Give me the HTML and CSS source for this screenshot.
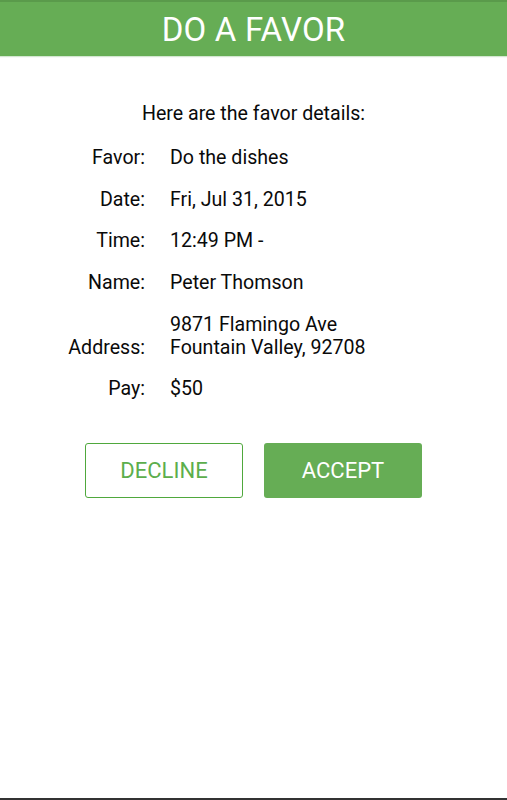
FILE: index.html
```html
<!DOCTYPE html>
<html lang="en">
<head>
    <meta charset="UTF-8">
    <meta name="viewport" content="width=device-width, initial-scale=1.0">
    <title>Do A Favor</title>
    <link rel="stylesheet" href="styles.css">
</head>
<body>

    <!-- Title Bar -->
    <header class="title-bar">
        <h1>DO A FAVOR</h1>
    </header>

    <main class="content">
        <p class="intro">Here are the favor details:</p>

        <!-- Favor Details -->
        <div class="details">
            <span class="label">Favor:</span>
            <span class="value">Do the dishes</span>

            <span class="label">Date:</span>
            <span class="value">Fri, Jul 31, 2015</span>

            <span class="label">Time:</span>
            <span class="value">12:49 PM -</span>

            <span class="label">Name:</span>
            <span class="value">Peter Thomson</span>

            <span class="label">Address:</span>
            <span class="value">9871 Flamingo Ave<br>Fountain Valley, 92708</span>

            <span class="label">Pay:</span>
            <span class="value">$50</span>
        </div>

        <div class="actions">
            <button class="button button-outline">DECLINE</button>
            <button class="button button-filled">ACCEPT</button>
        </div>
    </main>

    <div class="bottom-edge"></div>

</body>
</html>
```

FILE: styles.css
```css
/* General Styles */
html, body {
    height: 100%;
}

body {
    margin: 0;
    font-family: Roboto, 'Liberation Sans', sans-serif;
    background: #fff;
    color: #0a0a0a;
    display: flex;
    flex-direction: column;
}

/* Title Bar */
.title-bar {
    height: 54px;
    background: #66ad55;
    border-top: 2px solid #5a9a4b;
    box-shadow: 0 1px 1px rgba(80, 160, 70, 0.25);
    display: flex;
    align-items: center;
    justify-content: center;
}

.title-bar h1 {
    margin: 0;
    color: #fff;
    font-size: 33px;
    font-weight: 400;
    letter-spacing: 0.2px;
}

/* Content */
.content {
    flex: 1;
}

.intro {
    margin: 46px 0 0;
    text-align: center;
    font-size: 19.6px;
    line-height: 23px;
}

.details {
    display: grid;
    grid-template-columns: 145px 1fr;
    column-gap: 25px;
    row-gap: 18.7px;
    margin-top: 21px;
    font-size: 19.6px;
    line-height: 23px;
}

.label {
    text-align: right;
    align-self: end;
}

/* Buttons */
.actions {
    display: flex;
    justify-content: center;
    gap: 21px;
    margin-top: 43px;
}

.button {
    width: 158px;
    height: 55px;
    font-family: Roboto, 'Liberation Sans', sans-serif;
    font-size: 22px;
    border-radius: 3px;
    cursor: pointer;
}

.button-outline {
    background: #fff;
    color: #5cae4c;
    border: 1px solid #4fa83d;
}

.button-filled {
    background: #66ad55;
    color: #fff;
    border: none;
}

.bottom-edge {
    height: 2px;
    background: #333;
}
```
